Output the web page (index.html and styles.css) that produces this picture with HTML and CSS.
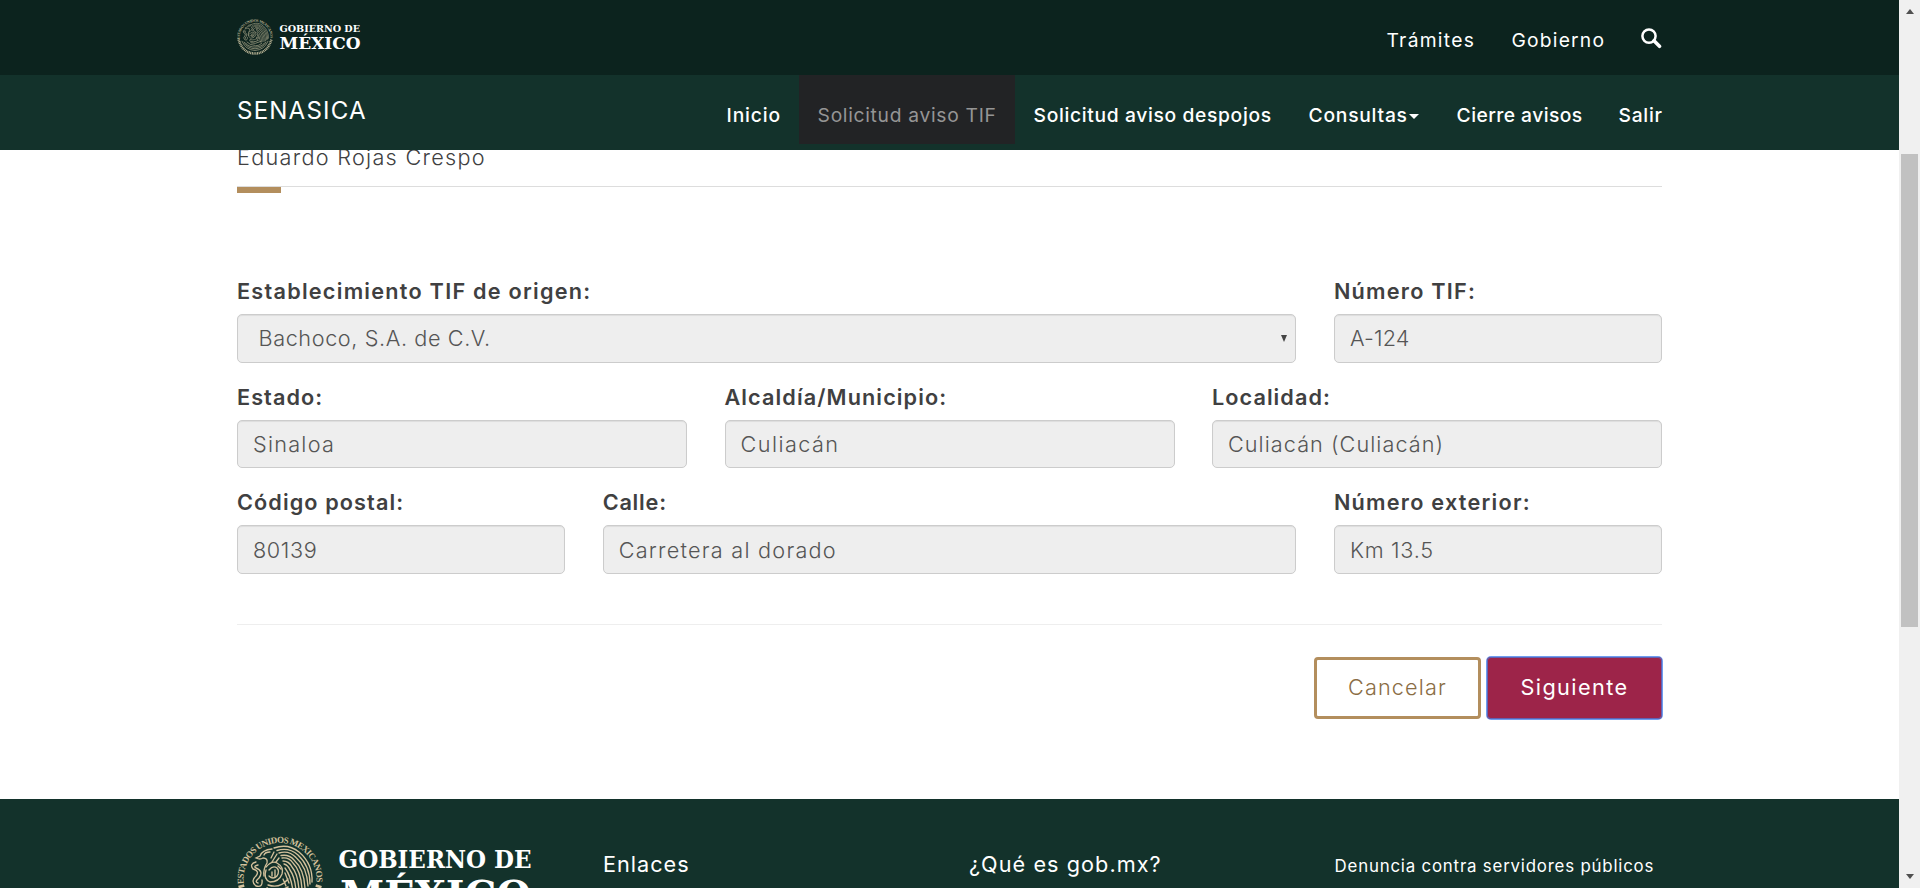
FILE: index.html
```
<!DOCTYPE html>
<html lang="es">
<head>
<meta charset="utf-8">
<title>SENASICA - Solicitud aviso TIF</title>
<link rel="stylesheet" href="styles.css">
</head>
<body>
<svg class="defs" width="0" height="0">
  <defs>
    <path id="ring" d="M-36.200 5 A36.500 36.500 0 1 1 36.200 5"/>
    <symbol id="emblem" viewBox="-44 -44 88 88">
      <g fill="none" stroke="currentColor" stroke-linecap="round">
        <g stroke-width="1.350">
          <path d="M-6 -31 Q8 -36 19 -27 Q33 -15 32 3"/>
          <path d="M-3 -28.500 Q9 -32 18 -24 Q30 -13 30 5"/>
          <path d="M-1 -26 Q9 -29 16 -21.500 Q27 -12 28 7"/>
          <path d="M1 -23.500 Q9 -25 14 -19 Q24 -10 25 9"/>
          <path d="M2 -21 Q9 -22 13 -16 Q21 -8 22 10"/>
          <path d="M3 -18 Q9 -18 12 -12 Q18 -5 19 11"/>
          <path d="M4 -15 Q8 -14 10 -9 Q15 -2 16 12"/>
          <path d="M5 -11 Q11 -3 13 12"/>
          <path d="M-8 -30 Q-18 -29 -20 -23 L-24 -21 Q-20 -19 -17 -21 Q-12 -21 -13 -16 Q-17 -10 -16 -3"/>
          <path d="M-10 -27 Q-15 -27 -16 -24 M-6 -27 L-9 -21 M-3 -25 L-8 -17 M-1 -21 L-4 -17"/>
          <path d="M-14 -12 Q-8 -19 -3 -16 Q4 -12 2 -5 Q-1 3 -10 3 Q-17 0 -14 -9"/>
          <path d="M-11 -9 Q-7 -14 -3 -11 Q0 -8 -3 -3 Q-7 1 -11 -3"/>
          <path d="M-8 -7 v4 M-5 -9 v7 M-2 -13 l3 3 M-12 6 Q0 10 8 0 M5 -6 L9 4 M3 0 L6 7"/>
          <path d="M-24 -17 Q-31 -15 -27 -10 Q-20 -8 -24 -3 Q-30 2 -24 7 Q-17 9 -18 1"/>
          <path d="M-22 -14 Q-27 -13 -24 -11 Q-16 -8 -21 -1 Q-26 3 -22 4"/>
        </g>
        <g stroke-width="1.600">
          <path d="M-13 9 Q-5 15 8 8 M-10 14 Q0 18 13 11 M-19 12 Q-12 20 0 20 M16 15 Q10 21 2 21"/>
          <path d="M-31 10 Q-22 31 0 32 Q22 31 31 10 M-26 12 Q-19 27 0 28 Q19 27 26 12 M-22 15 Q-14 24 0 24 Q14 24 22 15"/>
        </g>
        <path stroke-width="6" stroke-dasharray="2.500 1.500" stroke-linecap="butt" d="M-39 6 Q-30 38 0 39.500 Q30 38 39 6"/>
      </g>
      <text class="ring-text"><textPath href="#ring" textLength="122" lengthAdjust="spacing">ESTADOS UNIDOS MEXICANOS</textPath></text>
    </symbol>
  </defs>
</svg>

<div class="viewport">
  <div class="page">
    <header class="header">
      <div class="topbar">
        <div class="container bar-inner">
          <svg class="brand" width="130" height="44" viewBox="0 0 130 44">
            <use href="#emblem" x="-0.500" y="3.500" width="37" height="37"/>
            <text class="brand-text" x="42.500" y="17" font-size="9.600" textLength="80.500" lengthAdjust="spacingAndGlyphs">GOBIERNO DE</text>
            <text class="brand-text" x="42.500" y="34" font-size="16.500" textLength="81" lengthAdjust="spacingAndGlyphs">MÉXICO</text>
          </svg>
          <nav class="top-nav">
            <a class="tramites">Trámites</a>
            <a class="gobierno">Gobierno</a>
            <svg class="search" width="21" height="21" viewBox="0 0 21 21" fill="none" stroke="#fff"><circle cx="8" cy="8.100" r="6.600" stroke-width="2.500"/><path d="M13 12.800 L18.500 18.300" stroke-width="3.600" stroke-linecap="round"/></svg>
          </nav>
        </div>
      </div>
      <div class="subbar">
        <div class="container bar-inner">
          <a class="site">SENASICA</a>
          <nav class="sub-nav">
            <a class="inicio">Inicio</a>
            <a class="active">Solicitud aviso TIF</a>
            <a class="despojos">Solicitud aviso despojos</a>
            <a class="consultas">Consultas<i class="caret"></i></a>
            <a class="cierre">Cierre avisos</a>
            <a class="salir">Salir</a>
          </nav>
        </div>
      </div>
    </header>

    <main class="container">
      <h1 class="title">Eduardo Rojas Crespo</h1>
      <div class="accent"></div>

      <div class="form">
        <div class="field span9"><label class="s123">Establecimiento TIF de origen:</label><div class="control select s06">Bachoco, S.A. de C.V.<i class="arrow"></i></div></div>
        <div class="field span3"><label class="s123">Número TIF:</label><div class="control s02">A-124</div></div>

        <div class="field span4"><label class="s105">Estado:</label><div class="control s123">Sinaloa</div></div>
        <div class="field span4"><label class="s11">Alcaldía/Municipio:</label><div class="control s14">Culiacán</div></div>
        <div class="field span4"><label class="s105">Localidad:</label><div class="control s10">Culiacán (Culiacán)</div></div>

        <div class="field span3"><label class="s11">Código postal:</label><div class="control low s06">80139</div></div>
        <div class="field span6"><label class="s08">Calle:</label><div class="control low s123">Carretera al dorado</div></div>
        <div class="field span3"><label class="s123">Número exterior:</label><div class="control low s07">Km 13.5</div></div>
      </div>

      <div class="actions">
        <button class="btn cancel">Cancelar</button>
        <button class="btn next">Siguiente</button>
      </div>
    </main>

    <footer class="footer">
      <div class="container footer-grid">
        <svg class="footer-logo" width="300" height="88" viewBox="0 0 300 88">
          <use href="#emblem" x="-1" y="-1" width="88" height="88"/>
          <text class="brand-text" x="101.500" y="32" font-size="23.500" textLength="193" lengthAdjust="spacingAndGlyphs">GOBIERNO DE</text>
          <text class="brand-text" x="103" y="72.500" font-size="39.500" textLength="191" lengthAdjust="spacingAndGlyphs">MÉXICO</text>
        </svg>
        <h2 class="s09">Enlaces</h2>
        <h2 class="s10">¿Qué es gob.mx?</h2>
        <a class="report">Denuncia contra servidores públicos</a>
      </div>
    </footer>
  </div>

  <div class="scrollbar">
    <i class="sb-up"></i>
    <div class="thumb"></div>
    <i class="sb-down"></i>
  </div>
</div>
</body>
</html>
```
FILE: styles.css
```
* { box-sizing: border-box; }
body { margin: 0; background: #fff; color: #404041; font-family: Inter, "Open Sans", sans-serif; overflow: hidden; }
.defs { position: absolute; }
.viewport { display: flex; height: 888px; overflow: hidden; }
.page { flex: 1; height: 888px; overflow: hidden; }
.container { width: 1425px; margin: 0 auto; }

/* Header */
.header { position: relative; z-index: 2; color: #fff; }
.topbar { height: 75px; background: #0c231e; }
.subbar { height: 75px; background: #13322b; }
.bar-inner { display: flex; justify-content: space-between; height: 75px; }
.brand { margin-top: 15px; color: #b5b092; }
.footer-logo { color: #d3c19c; overflow: visible; }
.brand-text { fill: #fff; font-family: "DejaVu Serif", serif; font-weight: 700; }
.ring-text { fill: currentColor; font: 700 9px "Liberation Serif", serif; }
.top-nav, .sub-nav { font-size: 19.26px; line-height: 70px; white-space: nowrap; }
.top-nav { display: grid; grid-template-columns: 125px 129.500px 21px; padding-top: 5px; }
.tramites { letter-spacing: 1.28px; }
.gobierno { letter-spacing: 1.2px; }
.search { margin-top: 23px; }
.site { padding-top: 21px; font-size: 24.08px; line-height: 30px; letter-spacing: 1.18px; }
.sub-nav { display: grid; grid-template-columns: 91px 216px 275px 148px 162px 81px; height: 69px; margin-right: -19px; font-weight: 500; }
.sub-nav a { padding: 5px 0 0 18.600px; line-height: 70px; }
.sub-nav .active { height: 69px; background: #222325; color: #959595; font-weight: 400; letter-spacing: .69px; }
.inicio { letter-spacing: .85px; }
.despojos { letter-spacing: .65px; }
.consultas { letter-spacing: .75px; }
.cierre { letter-spacing: .43px; }
.salir { letter-spacing: .7px; }
.caret { display: inline-block; margin-left: 1px; vertical-align: 3px; border: 5px solid transparent; border-top-color: #fff; border-bottom: 0; }

/* Title */
.title { margin: -8px 0 0; padding-bottom: 14px; border-bottom: 1px solid #ddd; font-size: 21.67px; font-weight: 300; line-height: 30px; letter-spacing: 1.28px; }
.accent { width: 44px; height: 6px; background: #b38e5d; }

/* Form */
.form { display: grid; grid-template-columns: repeat(12, 1fr); column-gap: 37.5px; row-gap: 20px; padding: 84px 0 50px; border-bottom: 1px solid #eee; font-size: 21.67px; }
.span3 { grid-column: span 3; }
.span4 { grid-column: span 4; }
.span6 { grid-column: span 6; }
.span9 { grid-column: span 9; }
.field label { display: block; margin-bottom: 8px; font-weight: 600; line-height: 29px; }
.control { position: relative; height: 48.6px; padding: 0 15px; border: 1px solid #ccc; border-radius: 5px; background: #eee; box-shadow: inset 0 1px 1px rgba(0, 0, 0, .075); color: #555; font-weight: 300; line-height: 46px; }
.select { padding-left: 20.500px; }
.low { line-height: 48px; }
.arrow { position: absolute; right: 8.500px; top: 20px; border: 3.500px solid transparent; border-top: 7px solid #444; border-bottom: 0; }

/* Letter spacing */
.s02 { letter-spacing: .2px; }
.s06 { letter-spacing: .6px; }
.s07 { letter-spacing: .74px; }
.s08 { letter-spacing: .8px; }
.s09 { letter-spacing: 1px; }
.s10 { letter-spacing: 1.05px; }
.s105 { letter-spacing: 1.05px; }
.s11 { letter-spacing: 1.1px; }
.s123 { letter-spacing: 1.24px; }
.s14 { letter-spacing: 1.44px; }

/* Buttons */
.actions { display: flex; justify-content: flex-end; gap: 6px; margin: 32px 0 80px; }
.btn { height: 62px; padding: 1px 0 0; border-radius: 4px; font: 300 21.67px/1 Inter, sans-serif; }
.cancel { width: 167px; border: 3px solid #b38e5d; background: #fff; color: #8a6d45; letter-spacing: 1.15px; }
.next { width: 175px; border: 0; background: #9d2449; color: #fff; font-weight: 400; letter-spacing: 1.4px; box-shadow: 0 0 0 1px #6f9df0, inset 0 0 0 1px #5f62b4; }

/* Footer */
.footer { height: 240px; background: #13322b; color: #fff; }
.footer-grid { display: grid; grid-template-columns: 366px 366px 365.6px 327.4px; padding-top: 37px; }
.footer h2 { margin: 13px 0 0; font-size: 21.67px; font-weight: 400; line-height: 30px; }
.report { padding-top: 15px; font-size: 16.85px; line-height: 30px; letter-spacing: .8px; white-space: nowrap; }

/* Scrollbar */
.scrollbar { display: flex; flex-direction: column; align-items: center; width: 21px; background: #f0f0f0; }
.thumb { width: 17px; height: 473px; margin-top: 140px; background: #c1c1c1; }
.sb-up, .sb-down { border: 4.5px solid transparent; }
.sb-up { margin-top: 9px; border-top: 0; border-bottom: 5px solid #505050; }
.sb-down { margin-top: auto; margin-bottom: 9px; border-bottom: 0; border-top: 5px solid #505050; }
```
